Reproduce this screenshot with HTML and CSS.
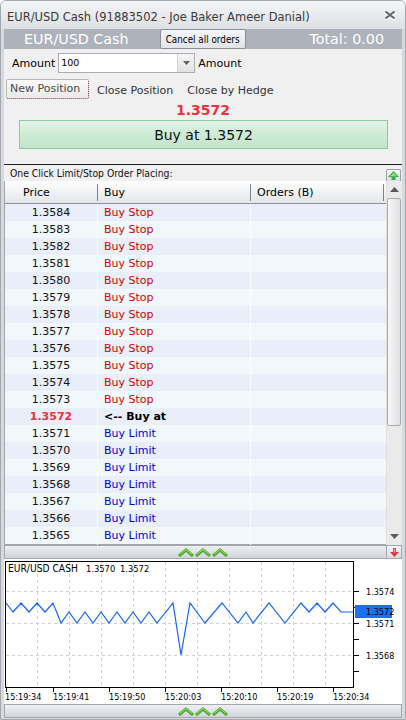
FILE: index.html
```html
<!DOCTYPE html>
<html>
<head>
<meta charset="utf-8">
<link rel="stylesheet" href="styles.css">
</head>
<body>
<div class="window">
  <div class="titlebar">
    <span class="title">EUR/USD Cash (91883502 - Joe Baker Ameer Danial)</span>
    <svg class="close" width="12" height="10" viewBox="0 0 12 10">
      <path d="M1.5 1.5 L10.5 8.5 M10.5 1.5 L1.5 8.5" stroke="#fff" stroke-width="3" transform="translate(0,1)"/>
      <path d="M1.5 1.5 L10.5 8.5 M10.5 1.5 L1.5 8.5" stroke="#5f6670" stroke-width="2.2"/>
    </svg>
  </div>
  <div class="content">
    <div class="strip">
      <span class="sym">EUR/USD Cash</span>
      <button class="cancel">Cancel all orders</button>
      <span class="total">Total: 0.00</span>
    </div>
    <div class="panel">
      <div class="amount-row">
        <span class="lbl">Amount</span>
        <div class="combo">
          <span class="combo-val">100</span>
          <span class="combo-btn"><svg width="7" height="4" viewBox="0 0 7 4"><path d="M0 0 H7 L3.5 4 Z" fill="#606060"/></svg></span>
        </div>
        <span class="lbl">Amount</span>
      </div>
      <div class="tabs">
        <span class="tab active">New Position</span>
        <span class="tab">Close Position</span>
        <span class="tab">Close by Hedge</span>
      </div>
      <div class="quote">1.3572</div>
      <button class="buy">Buy at 1.3572</button>
    </div>
    <div class="sep"></div>
    <div class="orders">
      <div class="orders-head">
        <span class="orders-title">One Click Limit/Stop Order Placing:</span>
        <span class="mini-btn"><svg width="11" height="9" viewBox="0 0 11 9"><path d="M5.5 0 L11 6 H7.5 V9 H3.5 V6 H0 Z" fill="#3aa84a"/><path d="M5.5 1.5 L9 5.2 H2 Z" fill="#8fe07a"/></svg></span>
      </div>
      <div class="grid-wrap">
        <div class="grid">
          <div class="ghead">
            <div class="h1">Price</div>
            <div class="h2">Buy</div>
            <div class="h3">Orders (B)</div>
          </div>
          <div class="rows">
            <div class="row"><div class="c1">1.3584</div><div class="c2 stop">Buy Stop</div><div class="c3"></div></div>
            <div class="row"><div class="c1">1.3583</div><div class="c2 stop">Buy Stop</div><div class="c3"></div></div>
            <div class="row"><div class="c1">1.3582</div><div class="c2 stop">Buy Stop</div><div class="c3"></div></div>
            <div class="row"><div class="c1">1.3581</div><div class="c2 stop">Buy Stop</div><div class="c3"></div></div>
            <div class="row"><div class="c1">1.3580</div><div class="c2 stop">Buy Stop</div><div class="c3"></div></div>
            <div class="row"><div class="c1">1.3579</div><div class="c2 stop">Buy Stop</div><div class="c3"></div></div>
            <div class="row"><div class="c1">1.3578</div><div class="c2 stop">Buy Stop</div><div class="c3"></div></div>
            <div class="row"><div class="c1">1.3577</div><div class="c2 stop">Buy Stop</div><div class="c3"></div></div>
            <div class="row"><div class="c1">1.3576</div><div class="c2 stop">Buy Stop</div><div class="c3"></div></div>
            <div class="row"><div class="c1">1.3575</div><div class="c2 stop">Buy Stop</div><div class="c3"></div></div>
            <div class="row"><div class="c1">1.3574</div><div class="c2 stop">Buy Stop</div><div class="c3"></div></div>
            <div class="row"><div class="c1">1.3573</div><div class="c2 stop">Buy Stop</div><div class="c3"></div></div>
            <div class="row current"><div class="c1">1.3572</div><div class="c2">&lt;-- Buy at</div><div class="c3"></div></div>
            <div class="row"><div class="c1">1.3571</div><div class="c2 limit">Buy Limit</div><div class="c3"></div></div>
            <div class="row"><div class="c1">1.3570</div><div class="c2 limit">Buy Limit</div><div class="c3"></div></div>
            <div class="row"><div class="c1">1.3569</div><div class="c2 limit">Buy Limit</div><div class="c3"></div></div>
            <div class="row"><div class="c1">1.3568</div><div class="c2 limit">Buy Limit</div><div class="c3"></div></div>
            <div class="row"><div class="c1">1.3567</div><div class="c2 limit">Buy Limit</div><div class="c3"></div></div>
            <div class="row"><div class="c1">1.3566</div><div class="c2 limit">Buy Limit</div><div class="c3"></div></div>
            <div class="row"><div class="c1">1.3565</div><div class="c2 limit">Buy Limit</div><div class="c3"></div></div>
          </div>
        </div>
        <div class="vscroll">
          <div class="sb-arrow"><svg width="9" height="5" viewBox="0 0 9 5"><path d="M4.5 0 L9 5 H0 Z" fill="#5a5a5a"/></svg></div>
          <div class="sb-thumb"></div>
          <div class="sb-track"></div>
          <div class="sb-arrow"><svg width="9" height="5" viewBox="0 0 9 5"><path d="M0 0 H9 L4.5 5 Z" fill="#5a5a5a"/></svg></div>
        </div>
      </div>
    </div>
    <div class="splitter">
      <span></span>
      <svg class="chev" width="50" height="9" viewBox="0 0 50 9">
        <g fill="none" stroke-width="3" stroke-linejoin="miter">
          <polyline points="1,8 8,2 15,8" stroke="#4fa82c"/>
          <polyline points="18,8 25,2 32,8" stroke="#4fa82c"/>
          <polyline points="35,8 42,2 49,8" stroke="#4fa82c"/>
        </g>
        <g fill="none" stroke-width="1">
          <polyline points="2,6.5 8,1.5 14,6.5" stroke="#9be070"/>
          <polyline points="19,6.5 25,1.5 31,6.5" stroke="#9be070"/>
          <polyline points="36,6.5 42,1.5 48,6.5" stroke="#9be070"/>
        </g>
      </svg>
      <span class="red-btn"><svg width="9" height="9" viewBox="0 0 9 9"><path d="M3 0 H6 V4 H9 L4.5 9 L0 4 H3 Z" fill="#e23548"/><path d="M3.8 0.8 H5.2 V4.5 H3.8 Z" fill="#f7a0aa"/></svg></span>
    </div>
    <div class="chart">
      <svg width="398" height="145" viewBox="0 0 398 145">
        <rect x="1.5" y="2.5" width="348" height="126" fill="#fff" stroke="#000"/>
        <g stroke="#cfcfcf" stroke-dasharray="3,3" shape-rendering="crispEdges">
          <line x1="2" y1="32.5" x2="349" y2="32.5"/>
          <line x1="2" y1="64.5" x2="349" y2="64.5"/>
          <line x1="2" y1="96.5" x2="349" y2="96.5"/>
          <line x1="33.5" y1="3" x2="33.5" y2="128"/>
          <line x1="65.5" y1="3" x2="65.5" y2="128"/>
          <line x1="97.5" y1="3" x2="97.5" y2="128"/>
          <line x1="129.5" y1="3" x2="129.5" y2="128"/>
          <line x1="161.5" y1="3" x2="161.5" y2="128"/>
          <line x1="193.5" y1="3" x2="193.5" y2="128"/>
          <line x1="225.5" y1="3" x2="225.5" y2="128"/>
          <line x1="257.5" y1="3" x2="257.5" y2="128"/>
          <line x1="289.5" y1="3" x2="289.5" y2="128"/>
          <line x1="321.5" y1="3" x2="321.5" y2="128"/>
        </g>
        <polyline fill="none" stroke="#1565f5" stroke-width="1.2" points="2,44 9,53 17,44 25,53 33,44 41,53 49,44 57,64 65,53 73,64 81,53 89,64 97,53 105,64 113,53 121,64 129,53 137,64 145,53 153,64 169,44 177,96 186,44 201,64 218,44 234,64 242,53 249,64 265,44 281,64 297,44 305,53 313,44 321,53 329,44 337,53 349,53"/>
        <g stroke="#000" shape-rendering="crispEdges">
          <line x1="349" y1="32.5" x2="355" y2="32.5"/>
          <line x1="349" y1="48.5" x2="355" y2="48.5"/>
          <line x1="349" y1="64.5" x2="355" y2="64.5"/>
          <line x1="349" y1="80.5" x2="355" y2="80.5"/>
          <line x1="349" y1="96.5" x2="355" y2="96.5"/>
          <line x1="349" y1="112.5" x2="355" y2="112.5"/>
          <line x1="2.5" y1="128" x2="2.5" y2="133"/>
          <line x1="49.5" y1="128" x2="49.5" y2="133"/>
          <line x1="105.5" y1="128" x2="105.5" y2="133"/>
          <line x1="161.5" y1="128" x2="161.5" y2="133"/>
          <line x1="217.5" y1="128" x2="217.5" y2="133"/>
          <line x1="273.5" y1="128" x2="273.5" y2="133"/>
          <line x1="329.5" y1="128" x2="329.5" y2="133"/>
        </g>
        <text class="ct" x="4" y="13">EUR/USD CASH</text>
        <text class="ctn" x="82" y="13">1.3570</text>
        <text class="ctn" x="116" y="13">1.3572</text>
        <text class="ax" x="362" y="36">1.3574</text>
        <text class="ax" x="362" y="68">1.3571</text>
        <text class="ax" x="362" y="100">1.3568</text>
        <rect x="351" y="46" width="37" height="13" fill="#1f70f0"/>
        <text class="ax" x="362" y="56" fill="#fff">1.3572</text>
        <text class="ax" x="1" y="141">15:19:34</text>
        <text class="ax" x="49" y="141">15:19:41</text>
        <text class="ax" x="105" y="141">15:19:50</text>
        <text class="ax" x="161" y="141">15:20:03</text>
        <text class="ax" x="217" y="141">15:20:10</text>
        <text class="ax" x="273" y="141">15:20:19</text>
        <text class="ax" x="329" y="141">15:20:34</text>
      </svg>
    </div>
    <div class="splitter">
      <span></span>
      <svg class="chev" width="50" height="9" viewBox="0 0 50 9">
        <g fill="none" stroke-width="3">
          <polyline points="1,8 8,2 15,8" stroke="#4fa82c"/>
          <polyline points="18,8 25,2 32,8" stroke="#4fa82c"/>
          <polyline points="35,8 42,2 49,8" stroke="#4fa82c"/>
        </g>
        <g fill="none" stroke-width="1">
          <polyline points="2,6.5 8,1.5 14,6.5" stroke="#9be070"/>
          <polyline points="19,6.5 25,1.5 31,6.5" stroke="#9be070"/>
          <polyline points="36,6.5 42,1.5 48,6.5" stroke="#9be070"/>
        </g>
      </svg>
      <span></span>
    </div>
  </div>
</div>
</body>
</html>
```

FILE: styles.css
```css
* { box-sizing: border-box; margin: 0; padding: 0; }
html, body { width: 406px; height: 720px; overflow: hidden; }
body { font-family: "DejaVu Sans", sans-serif; font-size: 11px; color: #000; background: #fff; }

.window {
  width: 406px; height: 720px;
  display: flex; flex-direction: column;
  border: 1px solid #a3a8af;
  border-radius: 6px 6px 0 0;
  background: #d6d9de;
  overflow: hidden;
}

.titlebar {
  height: 28px; flex: none;
  display: flex; align-items: center; justify-content: space-between;
  padding: 3px 9px 0 6px;
  background: linear-gradient(#f4f5f7, #dde0e4);
  font-size: 11.5px; color: #3b3b3b;
}
.close { display: block; margin-top: -4px; }

.content { flex: 1; display: flex; flex-direction: column; margin: 0 3px 1px; min-height: 0; }

.strip {
  height: 20px; flex: none;
  display: flex; align-items: center;
  background: #adb2bb; color: #fff;
  font-size: 14.3px;
  padding-right: 18px;
}
.sym { margin-left: 20px; }
.cancel {
  margin-left: 31px;
  width: 86px; height: 20px;
  font-family: "DejaVu Sans Condensed", "DejaVu Sans", sans-serif;
  font-size: 9.8px; color: #000;
  background: linear-gradient(#f6f7f8, #e1e3e6);
  border: 1px solid #8b9098; border-radius: 2px;
}
.total { margin-left: auto; }

.panel {
  height: 115px; flex: none;
  background: #f0f0f0;
  padding-top: 4px;
  display: flex; flex-direction: column;
}
.amount-row { height: 20px; display: flex; align-items: center; gap: 3px; padding-left: 8px; }
.combo { width: 137px; height: 20px; display: flex; border: 1px solid #abadb3; background: #fff; }
.combo-val { flex: 1; font-size: 9.5px; padding: 2px 0 0 2px; line-height: 14px; }
.combo-btn {
  width: 17px; display: flex; align-items: center; justify-content: center;
  border-left: 1px solid #d2d2d2;
  background: linear-gradient(#f5f5f5, #e2e2e2);
}

.tabs { height: 20px; margin-top: 6px; display: flex; padding-left: 2px; }
.tab { display: flex; align-items: center; padding: 2px 6px 0; margin-left: 2px; color: #333; }
.tab.active {
  margin-left: 0; width: 83px; padding: 0 0 1px 3px;
  border: 1px solid #b8b8b8; border-right: 1px dotted #7a3030; border-bottom: 1px dotted #7a3030;
  border-radius: 2px;
  background: linear-gradient(#fbfbfb, #e9e9ea);
  color: #4a4a4a;
}

.quote { height: 22px; line-height: 22px; text-align: center; color: #f0303c; font-weight: bold; font-size: 14px; }

.buy {
  height: 29px; margin: -1px 14px 0 15px;
  font-family: "DejaVu Sans", sans-serif; font-size: 14px; color: #111;
  border: 1px solid #8ec89c;
  background: linear-gradient(#e3f4e7, #cdebd4 50%, #c2e5ca);
}

.sep { height: 1px; flex: none; background: #202020; }

.orders { height: 380px; flex: none; background: #f0f0f0; display: flex; flex-direction: column; }
.orders-head { height: 16px; flex: none; display: flex; justify-content: space-between; align-items: center; }
.orders-title {
  padding-left: 6px;
  font-family: "DejaVu Sans Condensed", "DejaVu Sans", sans-serif; font-size: 10.3px; color: #111;
}
.mini-btn {
  align-self: flex-end;
  width: 15px; height: 12px; margin-right: 1px;
  display: flex; align-items: center; justify-content: center;
  border: 1px solid #9aa0a6; border-bottom: none; border-radius: 2px 2px 0 0;
  background: linear-gradient(#f4f5f6, #d9dce0);
}

.grid-wrap { flex: 1; display: flex; min-height: 0; }
.grid {
  flex: 1; display: flex; flex-direction: column;
  border-left: 1px solid #a0a5ac; border-bottom: 1px solid #a0a5ac;
  background: #f2f8fc;
}
.ghead {
  height: 23px; flex: none;
  display: grid; grid-template-columns: 93px 153px 1fr; align-items: center;
  background: linear-gradient(#ffffff, #e3e5ea);
  border-bottom: 1px solid #8a8f98;
}
.ghead > div { height: 17px; line-height: 17px; border-right: 1px solid #7d828b; }
.h1 { padding-left: 18px; }
.h2 { padding-left: 6px; }
.h3 { padding-left: 6px; margin-right: 2px; }

.rows { flex: 1; }
.row { display: grid; grid-template-columns: 93px 153px 1fr; height: 17px; line-height: 18px; background: #e9eef9; }
.row:nth-child(even) { background: #f1f8fc; }
.row > div { border-right: 1px solid #fbfdff; }
.row > .c3 { border-right: none; margin-right: 2px; }
.c1 { text-align: center; color: #111; }
.c2 { padding-left: 6px; }
.stop { color: #d00000; }
.limit { color: #0000d0; }
.current .c1 { color: #ee2e38; font-weight: bold; }
.current .c2 { font-weight: bold; color: #000; }

.vscroll { width: 16px; flex: none; display: flex; flex-direction: column; background: #eaeaeb; border-left: 1px solid #e0e0e0; }
.sb-arrow { height: 17px; flex: none; display: flex; align-items: center; justify-content: center; }
.sb-thumb {
  height: 228px; flex: none; margin-right: 1px;
  border: 1px solid #a9abaf; border-radius: 2px;
  background: linear-gradient(90deg, #f7f7f7, #e0e0e2);
}
.sb-track { flex: 1; }

.splitter {
  height: 14px; flex: none;
  display: grid; grid-template-columns: 1fr auto 1fr; align-items: center;
  background: linear-gradient(#eef0f2, #d0d4d9);
  border: 1px solid #a3a8af;
}
.chev { display: block; }
.red-btn {
  justify-self: end;
  width: 15px; height: 12px;
  display: flex; align-items: center; justify-content: center;
  border-left: 1px solid #a3a8af;
  background: linear-gradient(#f4f5f6, #d7dade);
}

.chart { height: 145px; flex: none; background: #fff; }
.chart svg { display: block; }
.ct { font-family: "DejaVu Sans Condensed", "DejaVu Sans", sans-serif; font-size: 10.2px; fill: #000; }
.ctn { font-family: "DejaVu Sans Condensed", "DejaVu Sans", sans-serif; font-size: 9.3px; fill: #000; }
.ax { font-family: "DejaVu Sans Condensed", "DejaVu Sans", sans-serif; font-size: 9px; fill: #000; }
```
